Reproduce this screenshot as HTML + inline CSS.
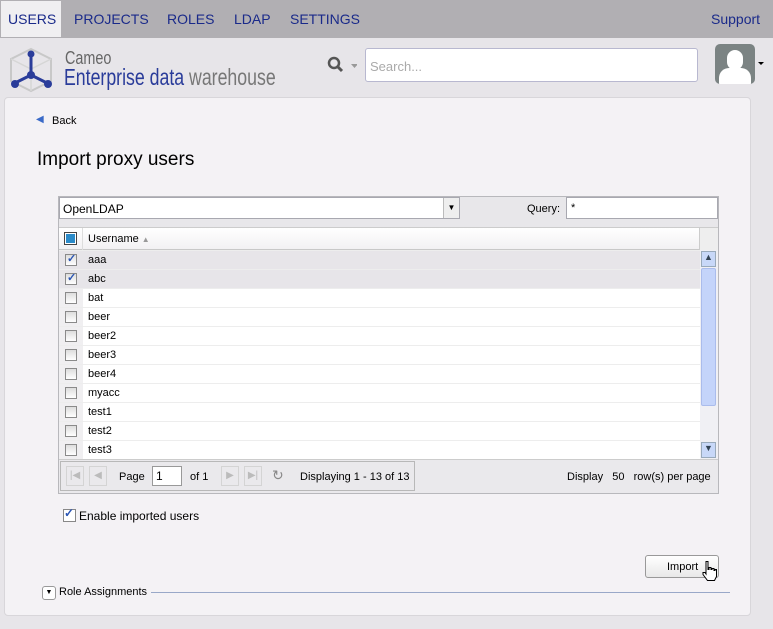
<!DOCTYPE html>
<html><head><style>
*{box-sizing:border-box;margin:0;padding:0}
body{width:773px;height:629px;background:#e7e5e9;font-family:"Liberation Sans",Tahoma,sans-serif;position:relative;overflow:hidden;font-size:11px;color:#000}
.abs{position:absolute}
#nav{left:0;top:0;width:773px;height:38px;background:#b1afb3}
#nav span{position:absolute;top:11px;font-size:14px;color:#1a2a8a}
.row{position:absolute;left:59px;width:641px;height:19px;border-top:1px solid #ededed}
.row .cb{position:absolute;left:6px;top:3px;width:12px;height:12px;border:1px solid #8a8a8a;background:linear-gradient(#ddd,#fff)}
.row .t{position:absolute;left:29px;top:3px}
.chk::after{content:"✓";position:absolute;left:1px;top:-3px;font-size:11px;color:#2b55b5;font-weight:bold}
.pb{position:absolute;top:6px;width:18px;height:20px;border:1px solid #d4d4d4;color:#bbb;font-size:10px;text-align:center;line-height:18px}
</style></head><body>
<div id="nav" class="abs">
<div class="abs" style="left:1px;top:1px;width:60px;height:36px;background:#f0eff1"></div>
<span style="left:8px">USERS</span><span style="left:74px">PROJECTS</span><span style="left:167px">ROLES</span><span style="left:234px">LDAP</span><span style="left:290px">SETTINGS</span><span style="left:711px">Support</span>
</div>
<svg class="abs" style="left:8px;top:47px" width="46" height="46" viewBox="0 0 46 46"><path d="M23 2 L43 12 L43 34 L23 44 L3 34 L3 12 Z" fill="none" stroke="#c8c8c8" stroke-width="2"/><path d="M3 12 L23 22 L43 12 M23 22 L23 44" fill="none" stroke="#d6d6d6" stroke-width="1.5"/><g stroke="#2a3c9a" stroke-width="3"><line x1="23" y1="8" x2="23" y2="28"/><line x1="23" y1="28" x2="7" y2="36"/><line x1="23" y1="28" x2="39" y2="36"/></g><g fill="#2a3c9a"><circle cx="23" cy="7" r="3.5"/><circle cx="7" cy="37" r="4"/><circle cx="40" cy="37" r="4"/><circle cx="23" cy="28" r="4"/></g></svg>
<div class="abs" style="left:65px;top:48px;font-size:18px;color:#666;transform:scaleX(0.8);transform-origin:0 0">Cameo</div>
<div class="abs" style="left:64px;top:64px;font-size:23px;color:#2a3c9a;white-space:nowrap;transform:scaleX(0.77);transform-origin:0 0">Enterprise data <span style="color:#777">warehouse</span></div>
<svg class="abs" style="left:327px;top:56px" width="30" height="18"><circle cx="7" cy="7" r="5" fill="none" stroke="#555" stroke-width="2.5"/><line x1="11" y1="11" x2="15" y2="15" stroke="#555" stroke-width="3"/><path d="M24 8 h7 l-3.5 4z" fill="#999"/></svg>
<div class="abs" style="left:365px;top:48px;width:333px;height:34px;background:#fff;border:1px solid #b8b8d0;border-radius:3px;color:#aaa;font-size:13px;padding:10px 4px">Search...</div>
<div class="abs" style="left:715px;top:44px;width:40px;height:40px;background:#7b8383;border-radius:5px;overflow:hidden"><div class="abs" style="left:12px;top:6px;width:16px;height:20px;border-radius:8px;background:#fff"></div><div class="abs" style="left:4px;top:24px;width:32px;height:20px;border-radius:10px 10px 0 0;background:#fff"></div></div>
<div class="abs" style="left:758px;top:62px;border:3px solid transparent;border-top:3px solid #000"></div>
<div class="abs" style="left:4px;top:97px;width:747px;height:519px;background:#f4f2f5;border:1px solid #d8d6da;border-radius:4px"></div>
<div class="abs" style="left:36px;top:114px;color:#3a6ac8;font-size:10px">◀</div>
<div class="abs" style="left:52px;top:115px">Back</div>
<div class="abs" style="left:37px;top:149px;font-size:19px">Import proxy users</div>
<div class="abs" style="left:58px;top:196px;width:661px;height:298px;border:1px solid #b8b8bc;background:#fff"></div>
<div class="abs" style="left:59px;top:197px;width:659px;height:30px;background:#e8e7ea"></div>
<div class="abs" style="left:59px;top:197px;width:401px;height:22px;background:#fff;border:1px solid #a8a8b0;font-size:12px;padding:4px 3px">OpenLDAP</div>
<div class="abs" style="left:443px;top:198px;width:16px;height:20px;background:#eee;border-left:1px solid #bbb;font-size:8px;text-align:center;line-height:20px">▼</div>
<div class="abs" style="left:527px;top:203px">Query:</div>
<div class="abs" style="left:566px;top:197px;width:152px;height:22px;background:#fff;border:1px solid #a8a8b0;padding:4px 4px">*</div>
<div class="abs" style="left:59px;top:227px;width:659px;height:23px;background:linear-gradient(#fff,#f2f1f3);border-bottom:1px solid #c8c8c8;border-top:1px solid #ccc"></div>
<div class="abs" style="left:59px;top:228px;width:24px;height:22px;border-right:1px solid #ddd"></div>
<div class="abs" style="left:64px;top:232px;width:13px;height:13px;border:1px solid #444;background:#2a8ac8;box-shadow:inset 0 0 0 1px #fff"></div>
<div class="abs" style="left:88px;top:233px">Username <span style="color:#999;font-size:8px">▲</span></div>
<div class="abs" style="left:699px;top:228px;width:19px;height:22px;border-left:1px solid #ccc;background:#eee"></div>
<div class="abs" style="left:59px;top:250px;width:24px;height:209px;background:#f0eff1"></div>
<div class="row" style="top:250px;background:#e7e5e9"><div class="cb chk"></div><div class="t">aaa</div></div>
<div class="row" style="top:269px;background:#e7e5e9"><div class="cb chk"></div><div class="t">abc</div></div>
<div class="row" style="top:288px"><div class="cb"></div><div class="t">bat</div></div>
<div class="row" style="top:307px"><div class="cb"></div><div class="t">beer</div></div>
<div class="row" style="top:326px"><div class="cb"></div><div class="t">beer2</div></div>
<div class="row" style="top:345px"><div class="cb"></div><div class="t">beer3</div></div>
<div class="row" style="top:364px"><div class="cb"></div><div class="t">beer4</div></div>
<div class="row" style="top:383px"><div class="cb"></div><div class="t">myacc</div></div>
<div class="row" style="top:402px"><div class="cb"></div><div class="t">test1</div></div>
<div class="row" style="top:421px"><div class="cb"></div><div class="t">test2</div></div>
<div class="row" style="top:440px"><div class="cb"></div><div class="t">test3</div></div>
<div class="abs" style="left:700px;top:250px;width:18px;height:209px;background:#f0f0f4"></div>
<div class="abs" style="left:701px;top:251px;width:15px;height:16px;background:#c8d8f8;border:1px solid #9ab;font-size:9px;text-align:center;color:#345">▲</div>
<div class="abs" style="left:701px;top:268px;width:15px;height:138px;background:#c4d4fa;border:1px solid #aabcec;border-radius:2px"></div>
<div class="abs" style="left:701px;top:442px;width:15px;height:16px;background:#c8d8f8;border:1px solid #9ab;font-size:9px;text-align:center;color:#345">▼</div>
<div class="abs" style="left:59px;top:459px;width:659px;height:34px;background:#eae9ec;border-top:1px solid #ccc"></div>
<div class="abs" style="left:60px;top:461px;width:355px;height:30px;border:1px solid #b8b8b8"></div>
<div class="pb" style="left:66px;top:466px">|◀</div><div class="pb" style="left:89px;top:466px">◀</div>
<div class="abs" style="left:119px;top:471px">Page</div>
<div class="abs" style="left:152px;top:466px;width:30px;height:20px;background:#fff;border:1px solid #999;font-size:12px;padding:2px 3px">1</div>
<div class="abs" style="left:190px;top:471px">of 1</div>
<div class="pb" style="left:221px;top:466px">▶</div><div class="pb" style="left:244px;top:466px">▶|</div>
<div class="abs" style="left:272px;top:467px;color:#888;font-size:14px">↻</div>
<div class="abs" style="left:300px;top:471px">Displaying 1 - 13 of 13</div>
<div class="abs" style="left:567px;top:471px;white-space:nowrap">Display &nbsp; 50 &nbsp; row(s) per page</div>
<div class="abs" style="left:63px;top:509px;width:13px;height:13px;border:1px solid #888;background:#fff"></div>
<div class="abs" style="left:64px;top:506px;color:#2b55b5;font-weight:bold;font-size:12px">✓</div>
<div class="abs" style="left:79px;top:509px;font-size:12px">Enable imported users</div>
<div class="abs" style="left:645px;top:555px;width:74px;height:23px;border:1px solid #999;border-radius:3px;background:linear-gradient(#fff,#e8e8e8);padding:5px 0 0 21px">Import</div>
<svg class="abs" style="left:701px;top:560px" width="16" height="22" viewBox="0 0 16 22"><path d="M5 1.5 h2 v8 h1 v-2 h2 v2 h1 v-1 h2 v2 h1 v-1 h1.5 v7 l-2 4 h-7 l-4.5 -6 v-2 h2 l1 1.5 z" fill="#fff" stroke="#000" stroke-width="1"/></svg>
<div class="abs" style="left:42px;top:586px;width:14px;height:14px;border:1px solid #999;border-radius:3px;background:#fff;font-size:7px;text-align:center;line-height:12px">▼</div>
<div class="abs" style="left:59px;top:586px">Role Assignments</div>
<div class="abs" style="left:151px;top:592px;width:579px;height:1px;background:#99a8c8"></div>
</body></html>
